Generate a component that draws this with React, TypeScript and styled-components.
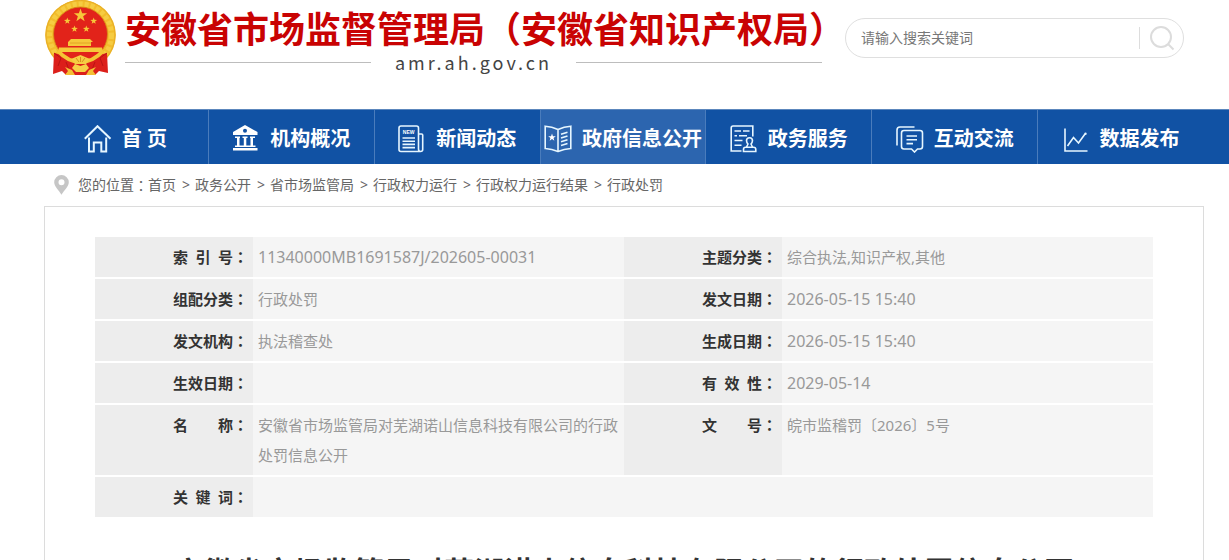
import React from 'react';
import styled, { createGlobalStyle } from 'styled-components';

const GlobalStyle = createGlobalStyle`
  *, *::before, *::after { box-sizing: border-box; }
  body {
    margin: 0;
    background: #fff;
    color: #666;
    font-family: "Noto Sans", "Noto Sans CJK SC", sans-serif;
    font-size: 14px;
  }
  a { color: inherit; text-decoration: none; }
`;

const Header = styled.header`
  display: flex;
  align-items: flex-start;
  height: 109px;
  padding: 0 45px 0 44px;
`;

const Brand = styled.a`
  display: flex;
  flex: none;
  gap: 9px;
`;

const BrandText = styled.div`
  width: 697px;
  padding-top: 7px;
`;

const SiteName = styled.h1`
  margin: 0;
  color: #c90303;
  font: bold 36px/40px "Noto Sans CJK SC", sans-serif;
  white-space: nowrap;
`;

const Domain = styled.div`
  display: flex;
  align-items: center;
  gap: 24px;
  color: #444;
  font: 18px/30px "Noto Sans CJK SC", sans-serif;
  letter-spacing: 3px;

  &::before,
  &::after {
    content: "";
    flex: 1;
    height: 1px;
    background: #bdbdbd;
  }
`;

const SearchForm = styled.form`
  display: flex;
  flex: 1;
  align-items: center;
  min-width: 0;
  height: 40px;
  margin: 18px 0 0 23px;
  padding-left: 15px;
  border: 1px solid #dfdfdf;
  border-radius: 20px;
`;

const SearchInput = styled.input`
  flex: 1;
  min-width: 0;
  padding: 0;
  border: 0;
  outline: 0;
  background: none;
  color: #666;
  font: 14px/20px "Noto Sans", "Noto Sans CJK SC", sans-serif;

  &::placeholder { color: #777; opacity: 1; }
`;

const SearchButton = styled.button`
  display: flex;
  align-items: center;
  width: 44px;
  height: 22px;
  padding: 0 0 0 9px;
  border: 0;
  border-left: 1px solid #ddd;
  background: none;
`;

const NavBar = styled.nav`
  display: flex;
  height: 55px;
  padding: 0 26px 0 43px;
  border-top: 1px solid #5c87bd;
  background: #1152a4;
`;

const NavLink = styled.a<{ $active?: boolean }>`
  display: flex;
  flex: 1 1 0;
  align-items: center;
  justify-content: center;
  gap: 10px;
  padding-top: 3px;
  border-right: 1px solid #4a7cbc;
  background: ${(p) => (p.$active ? '#2c65af' : 'transparent')};
  color: #fff;
  font-size: 20px;
  font-weight: bold;
  line-height: 28px;
  white-space: nowrap;

  &:last-child { border-right: 0; }
  svg { flex: none; }
`;

const Breadcrumb = styled.nav`
  display: flex;
  align-items: center;
  height: 42px;
  padding: 0 25px 0 54px;
  line-height: 20px;

  svg { margin-right: 9px; }
`;

const Separator = styled.span`
  margin: 0 5px 0 6px;
`;

const Colon = styled.span`
  font-family: "Noto Sans CJK TC", sans-serif;
`;

const Panel = styled.main`
  margin: 0 25px 0 44px;
  padding: 30px 50px;
  border: 1px solid #dcdcdc;
`;

const InfoTable = styled.table`
  width: 100%;
  border-collapse: collapse;
  table-layout: fixed;
  font-size: 15px;
  line-height: 30px;

  tr { border-bottom: 2px solid #fff; }
`;

const LabelCol = styled.col`
  width: 158px;
`;

const ValueCol = styled.col`
  width: auto;
`;

const LabelCell = styled.th`
  padding: 5px 5px 5px 0;
  background: #ededed;
  color: #333;
  font-weight: bold;
  text-align: right;
  vertical-align: top;
  white-space: nowrap;
`;

const LabelText = styled.span`
  display: inline-block;
  width: 60px;
  text-align: justify;
  text-align-last: justify;
  vertical-align: top;
`;

const ValueCell = styled.td<{ $numeric?: boolean }>`
  padding: 5px 0 5px 5px;
  background: #f5f5f5;
  color: #999;
  font-size: ${(p) => (p.$numeric ? 16 : 15)}px;
  vertical-align: top;
`;

const ArticleTitle = styled.h2`
  margin: 32px 0 30px;
  color: #333;
  font-size: 30px;
  line-height: 42px;
  text-align: center;
`;

const starPoints = (cx: number, cy: number, r: number) =>
  Array.from({ length: 10 }, (_, i) => {
    const radius = i % 2 ? r * 0.4 : r;
    const a = (Math.PI * i) / 5 - Math.PI / 2;
    return `${(cx + radius * Math.cos(a)).toFixed(2)},${(cy + radius * Math.sin(a)).toFixed(2)}`;
  }).join(' ');

const Emblem = () => (
  <svg width="72" height="77" viewBox="0 0 72 77" role="img" aria-label="国徽">
    <circle cx="36.500" cy="35" r="35.300" fill="#f2bd2c" />
    <circle cx="36.500" cy="35" r="31" fill="none" stroke="#f6cc42" strokeWidth="5" strokeDasharray="4 2" />
    <circle cx="36.500" cy="35" r="34.600" fill="none" stroke="#e8ae28" strokeWidth="1" />
    <circle cx="36.500" cy="34" r="27" fill="#e2231a" stroke="#d58a16" strokeWidth="0.800" />
    <g fill="#f6c83a">
      <polygon points={starPoints(36.5, 15.5, 7)} />
      <polygon points={starPoints(23.3, 21, 3.5)} />
      <polygon points={starPoints(49.7, 21, 3.5)} />
      <polygon points={starPoints(30.5, 29, 3.5)} />
      <polygon points={starPoints(42.3, 29, 3.5)} />
      <path d="M27 39H46L49 42H47V46H24V42Z" />
      <path d="M15 47.500H58L59 52H14Z" />
    </g>
    <path d="M26 43H47" stroke="#e09a22" strokeWidth="0.800" />
    <path d="M10 53Q22 55 36.500 64Q51 55 63 53L64 73L55 71L51 75H22L18 71L9 74Z" fill="#dc1f1a" />
    <path d="M10 53L17 58L14 66M63 53L56 58L59 66M22 62L26 72M51 62L47 72" fill="none" stroke="#b91414" strokeWidth="1" />
    <path d="M14 51Q24 62 36.500 62Q49 62 59 51" fill="none" stroke="#f4c535" strokeWidth="4" />
    <path d="M27 59L36.500 55L46 59L42 64H31Z" fill="#f6cd43" />
    <path d="M36.500 57V62M32 58L35 62M41 58L38 62" stroke="#d28a18" strokeWidth="0.900" />
    <path d="M28 68L31 64L36.500 66L42 64L45 68L41 72H32Z" fill="#f7cf46" />
    <path d="M21 67L28 70L31 75H21L24 71ZM52 67L45 70L42 75H52L49 71Z" fill="#f3bf35" />
  </svg>
);

const NavIcon = ({ children }: { children: React.ReactNode }) => (
  <svg width="28" height="28" viewBox="0 0 28 28" fill="none" stroke="#e6f6ff" strokeWidth="1.600" aria-hidden="true">
    {children}
  </svg>
);

const icons = {
  home: (
    <NavIcon>
      <path d="M0.800 13.800L13.500 1.200L26.500 13.800M5 12.500V26.600H9.800V17.500H17.300V26.600H22.200V12.500" strokeWidth="2" />
    </NavIcon>
  ),
  bank: (
    <NavIcon>
      <path d="M13 0L25.500 7V10H1V7ZM13 3.700A2 2 0 1 0 13 7.700A2 2 0 1 0 13 3.700Z" fill="#fff" fillRule="evenodd" stroke="none" />
      <path d="M3 11.500H8V13H7.500V21H5V13H3ZM10.500 11.500H15.500V13H14.300V21H11.800V13H10.500ZM18 11.500H23V13H21V21H18.500V13H18ZM3 20.500H23.500V22H3ZM1 23H25.500V25.500H1Z" fill="#fff" stroke="none" />
    </NavIcon>
  ),
  news: (
    <NavIcon>
      <path d="M20.500 24V3Q20.500 1 18.500 1H3Q1 1 1 3V24.500Q1 26.500 3 26.500H22.500Q24.700 26.500 24.700 24.500V10Q24.700 9 23.500 9H20.500M20.500 24Q20.500 26.500 22.500 26.500" />
      <path d="M4.500 13H17M4.500 16.200H17M4.500 19.400H17M4.500 22.600H17" />
      <text x="10.700" y="9" fill="#fff" stroke="none" fontSize="5" fontWeight="bold" textAnchor="middle" fontFamily="Liberation Sans, sans-serif">NEW</text>
    </NavIcon>
  ),
  book: (
    <NavIcon>
      <path d="M14 4.500Q8 1.500 1.200 1.200V23.500Q8 24 14 26.500Q20 24 26.800 23.500V1.200Q20 1.500 14 4.500V26.500" />
      <polygon points={starPoints(8, 12.5, 4)} fill="#fff" stroke="none" />
      <path d="M17 9.200L23.500 7.200M17 13L23.500 11M17 16.800L23.500 14.800M17 20.600L23.500 18.600" />
    </NavIcon>
  ),
  service: (
    <NavIcon>
      <path d="M11.500 26H1.200V3Q1.200 1 3 1H22.800V11.500M4.500 6H11M13 6H19.500M4.500 10.800H7M9 10.800H17M4.500 15.500H12.500M4.500 20.300H11.500" />
      <path d="M18.300 19.500Q16.500 17.500 16.500 15.800A3 3 0 0 1 22.500 15.800Q22.500 17.500 20.700 19.500M18.300 18.500L16.500 22M20.700 18.500L22.500 22M13.500 26.500V24.500Q13.500 22.300 15.500 22.300H23.500Q25.800 22.300 25.800 24.500V26.500Z" />
    </NavIcon>
  ),
  chat: (
    <NavIcon>
      <path d="M1 20.500V5Q1 2 4 2H18.500M8 5.500H24Q26.500 5.500 26.500 8V21.500Q26.500 24 24 24H21.500L18.500 27L15.500 24H8Q5.500 24 5.500 21.500V8Q5.500 5.500 8 5.500ZM10.500 11H21M10.500 14.800H21M10.500 18.600H17" />
    </NavIcon>
  ),
  chart: (
    <NavIcon>
      <path d="M3 3.500V26H25.500M5.500 21L11.500 12.500L16.500 18L23 9" />
      <circle cx="23.500" cy="8.700" r="1.200" fill="#e6f6ff" stroke="none" />
    </NavIcon>
  ),
};

const navItems: { text: string; icon: keyof typeof icons; active?: boolean }[] = [
  { text: '首 页', icon: 'home' },
  { text: '机构概况', icon: 'bank' },
  { text: '新闻动态', icon: 'news' },
  { text: '政府信息公开', icon: 'book', active: true },
  { text: '政务服务', icon: 'service' },
  { text: '互动交流', icon: 'chat' },
  { text: '数据发布', icon: 'chart' },
];

const crumbs = ['首页', '政务公开', '省市场监管局', '行政权力运行', '行政权力运行结果', '行政处罚'];

type Field = { label: string; value: string; numeric?: boolean };

const rows: Field[][] = [
  [
    { label: '索 引 号', value: '11340000MB1691587J/202605-00031', numeric: true },
    { label: '主题分类', value: '综合执法,知识产权,其他' },
  ],
  [
    { label: '组配分类', value: '行政处罚' },
    { label: '发文日期', value: '2026-05-15 15:40', numeric: true },
  ],
  [
    { label: '发文机构', value: '执法稽查处' },
    { label: '生成日期', value: '2026-05-15 15:40', numeric: true },
  ],
  [
    { label: '生效日期', value: '' },
    { label: '有 效 性', value: '2029-05-14', numeric: true },
  ],
  [
    { label: '名 称', value: '安徽省市场监管局对芜湖诺山信息科技有限公司的行政处罚信息公开' },
    { label: '文 号', value: '皖市监稽罚〔2026〕5号' },
  ],
  [{ label: '关 键 词', value: '' }],
];

export default function App() {
  return (
    <>
      <GlobalStyle />
      <Header>
        <Brand href="#">
          <Emblem />
          <BrandText>
            <SiteName>安徽省市场监督管理局（安徽省知识产权局）</SiteName>
            <Domain>amr.ah.gov.cn</Domain>
          </BrandText>
        </Brand>
        <SearchForm role="search" onSubmit={(e) => e.preventDefault()}>
          <SearchInput type="text" aria-label="搜索关键词" placeholder="请输入搜索关键词" />
          <SearchButton type="submit" aria-label="搜索">
            <svg width="26" height="26" viewBox="0 0 26 26" fill="none" stroke="#dcdcdc" strokeWidth="2">
              <circle cx="12" cy="12" r="10" />
              <path d="M19 19L24.500 24.500" />
            </svg>
          </SearchButton>
        </SearchForm>
      </Header>

      <NavBar>
        {navItems.map((item) => (
          <NavLink key={item.text} href="#" $active={item.active}>
            {icons[item.icon]}
            {item.text}
          </NavLink>
        ))}
      </NavBar>

      <Breadcrumb aria-label="您的位置">
        <svg width="15" height="20" viewBox="0 0 15 20" aria-hidden="true">
          <path d="M7.500 0A7.300 7.300 0 0 0 0.200 7.300C0.200 11.500 4.500 15 7.500 19.800C10.500 15 14.800 11.500 14.800 7.300A7.300 7.300 0 0 0 7.500 0ZM7.500 4.300A3 3 0 1 1 7.500 10.300A3 3 0 1 1 7.500 4.300Z" fill="#c6c6c6" fillRule="evenodd" />
        </svg>
        <span>您的位置</span>
        <Colon>：</Colon>
        {crumbs.map((crumb, i) => (
          <React.Fragment key={crumb}>
            {i > 0 && <Separator>&gt;</Separator>}
            <a href="#">{crumb}</a>
          </React.Fragment>
        ))}
      </Breadcrumb>

      <Panel>
        <InfoTable>
          <colgroup>
            <LabelCol />
            <ValueCol />
            <LabelCol />
            <ValueCol />
          </colgroup>
          <tbody>
            {rows.map((fields) => (
              <tr key={fields[0].label}>
                {fields.map((f) => (
                  <React.Fragment key={f.label}>
                    <LabelCell scope="row">
                      <LabelText>{f.label}</LabelText>
                      <Colon>：</Colon>
                    </LabelCell>
                    <ValueCell $numeric={f.numeric} colSpan={fields.length === 1 ? 3 : 1}>
                      {f.value}
                    </ValueCell>
                  </React.Fragment>
                ))}
              </tr>
            ))}
          </tbody>
        </InfoTable>
        <ArticleTitle>安徽省市场监管局对芜湖诺山信息科技有限公司的行政处罚信息公开</ArticleTitle>
      </Panel>
    </>
  );
}
